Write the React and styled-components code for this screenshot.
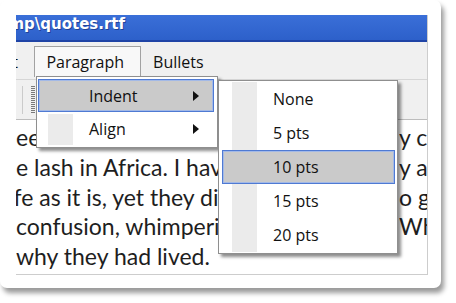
import React from 'react'
import styled, { createGlobalStyle } from 'styled-components'

const GlobalStyle = createGlobalStyle`
  html, body {
    margin: 0;
    padding: 0;
    background: #fff;
  }
  body {
    width: 456px;
    height: 303px;
    overflow: hidden;
  }
`;

const lines = [
  { left: 'eet the dawn with open eyes, and the', right: 'y co', shift: 0 },
  { left: 'e lash in Africa. I have seen the chains', right: 'y ar', shift: 0 },
  { left: 'ife as it is, yet they die in the dark', right: 'o gl', shift: -8 },
  { left: 'confusion, whimpering for answers', right: 'Wh', shift: 0 },
  { left: 'why they had lived.', right: '', shift: 0 },
];

const paragraphItems = [
  { label: 'Indent', sub: true, active: true },
  { label: 'Align', sub: true },
];

const indentItems = [
  { label: 'None' },
  { label: '5 pts' },
  { label: '10 pts', active: true },
  { label: '15 pts' },
  { label: '20 pts' },
];

function Arrow() {
  return (
    <ArrowBox>
      <svg width="6" height="10" viewBox="0 0 6 10">
        <path d="M0 0 L6 5 L0 10 Z" fill="#111" />
      </svg>
    </ArrowBox>
  );
}

export default function App() {
  return (
    <>
      <GlobalStyle />
      <Card>
        <Shot>
          <TitleBar>
            <Title>Temp\quotes.rtf</Title>
          </TitleBar>
          <MenuBar>
            <Stub>Edit</Stub>
            <MenuTab $open>Paragraph</MenuTab>
            <MenuTab>Bullets</MenuTab>
          </MenuBar>
          <ToolBar>
            <Grip />
          </ToolBar>
          <Editor>
            {lines.map((l, i) => (
              <Line key={i}>
                <Lead $shift={l.shift}>{l.left}</Lead>
                <Tail>{l.right}</Tail>
              </Line>
            ))}
          </Editor>

          <Dropdown $left={20} $top={61} $width={182} $pad="2px 3px 2px 1px">
            {paragraphItems.map((it) => (
              <Item key={it.label} $h={33} $active={it.active}>
                <IconCell $active={it.active} $inset={2} />
                <Label>{it.label}</Label>
                {it.sub && <Arrow />}
              </Item>
            ))}
          </Dropdown>

          <Dropdown $left={202} $top={65} $width={180} $pad="1px 2px 1px 3px">
            {indentItems.map((it) => (
              <Item key={it.label} $h={34} $active={it.active}>
                <IconCell $active={it.active} $inset={0} />
                <Label>{it.label}</Label>
              </Item>
            ))}
          </Dropdown>
        </Shot>
      </Card>
    </>
  );
}

const Card = styled.div`
  width: 441px;
  height: 288px;
  box-sizing: border-box;
  padding: 15px 0 0 16px;
  background: #fff;
  border-radius: 7px;
  box-shadow: 3px 5px 5px rgba(0, 0, 0, 0.4);
`;

const Shot = styled.div`
  position: relative;
  width: 412px;
  height: 260px;
  box-sizing: border-box;
  border-right: 1px solid #cdcdcd;
  border-bottom: 1px solid #cdcdcd;
  overflow: hidden;
  display: flex;
  flex-direction: column;
`;

const TitleBar = styled.div`
  height: 27px;
  box-sizing: border-box;
  padding-top: 1px;
  background: linear-gradient(#3a6fd8, #2d60ca);
  border-bottom: 2px solid #1f44a6;
  overflow: hidden;
  white-space: nowrap;
`;

const Title = styled.div`
  margin-left: -26px;
  font-family: "DejaVu Sans", sans-serif;
  font-weight: bold;
  font-size: 15px;
  line-height: 17px;
  color: #fff;
  text-shadow: 1px 1px 0 rgba(10, 20, 80, 0.45);
`;

const MenuBar = styled.div`
  height: 37px;
  box-sizing: border-box;
  padding-top: 4px;
  background: #f0f0f0;
  display: flex;
  align-items: flex-start;
  font-family: "Open Sans", sans-serif;
  font-size: 16px;
  color: #111;
`;

const Stub = styled.div`
  margin-left: -26.5px;
  margin-right: 16.5px;
  line-height: 30px;
  padding-top: 1px;
`;

const MenuTab = styled.div`
  height: 31px;
  box-sizing: border-box;
  padding: 0 16px 0 11px;
  line-height: 30px;
  border: 1px solid ${(p) => (p.$open ? '#a2a2a2' : 'transparent')};
  border-bottom: none;
  background: ${(p) => (p.$open ? '#f8f8f8' : 'transparent')};
`;

const ToolBar = styled.div`
  height: 41px;
  box-sizing: border-box;
  background: #f0f0f0;
  border-top: 1px solid #d6d6d6;
  border-bottom: 1px solid #bdbdbd;
  display: flex;
  align-items: center;
  padding-left: 6px;
`;

const Grip = styled.div`
  height: 28px;
  width: 4px;
  padding-left: 8px;
  border-left: 1px solid #cbcbcb;
  background: repeating-linear-gradient(to bottom, #7a7a7a 0 1px, transparent 1px 2px) content-box;
`;

const Editor = styled.div`
  flex: 1;
  background: #fff;
  padding-top: 3px;
  font-family: Lato, sans-serif;
  font-size: 23px;
  line-height: 29.75px;
  color: #1e1e1e;
`;

const Line = styled.div`
  display: grid;
  grid-template-columns: 383px 1fr;
  white-space: nowrap;
`;

const Lead = styled.div`
  overflow: hidden;
  text-indent: ${(p) => p.$shift}px;
`;

const Tail = styled.div`
  overflow: hidden;
`;

const Dropdown = styled.div`
  position: absolute;
  left: ${(p) => p.$left}px;
  top: ${(p) => p.$top}px;
  width: ${(p) => p.$width}px;
  box-sizing: border-box;
  padding: ${(p) => p.$pad};
  background: #fff;
  border: 1px solid #8f8f8f;
  box-shadow: 3px 3px 3px rgba(0, 0, 0, 0.45);
  font-family: "Open Sans", sans-serif;
  font-size: 16px;
  color: #111;
`;

const Item = styled.div`
  height: ${(p) => p.$h}px;
  display: flex;
  align-items: center;
  background: ${(p) => (p.$active ? '#cacaca' : 'transparent')};
  box-shadow: ${(p) =>
    p.$active ? 'inset 0 0 0 1px #4f7ad3, inset 0 0 0 2px #a3b9e6' : 'none'};
`;

const IconCell = styled.div`
  align-self: stretch;
  width: 25px;
  margin: ${(p) => p.$inset}px 0 0 10px;
  background: ${(p) => (p.$active ? 'transparent' : '#ebebeb')};
`;

const Label = styled.div`
  margin-left: 16px;
  line-height: 20px;
`;

const ArrowBox = styled.div`
  margin-left: auto;
  margin-right: 15px;
  display: flex;
`;
